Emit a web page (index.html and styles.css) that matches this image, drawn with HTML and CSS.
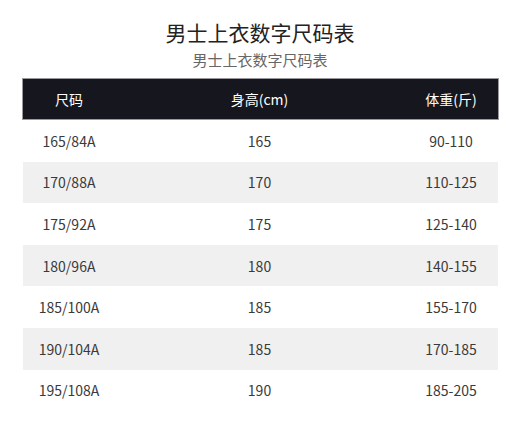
FILE: index.html
```html
<!DOCTYPE html>
<html lang="zh">
<head>
<meta charset="utf-8">
<link rel="stylesheet" href="styles.css">
</head>
<body>
<div class="page">
  <h1 class="title">男士上衣数字尺码表</h1>
  <div class="subtitle">男士上衣数字尺码表</div>
  <div class="table">
    <div class="row head"><span>尺码</span><span>身高(cm)</span><span>体重(斤)</span></div>
    <div class="row"><span>165/84A</span><span>165</span><span>90-110</span></div>
    <div class="row alt"><span>170/88A</span><span>170</span><span>110-125</span></div>
    <div class="row"><span>175/92A</span><span>175</span><span>125-140</span></div>
    <div class="row alt"><span>180/96A</span><span>180</span><span>140-155</span></div>
    <div class="row"><span>185/100A</span><span>185</span><span>155-170</span></div>
    <div class="row alt"><span>190/104A</span><span>185</span><span>170-185</span></div>
    <div class="row"><span>195/108A</span><span>190</span><span>185-205</span></div>
  </div>
</div>
</body>
</html>
```
FILE: styles.css
```css
html, body {
  margin: 0;
  padding: 0;
  background: #ffffff;
}
body {
  font-family: "Noto Sans CJK SC", "Noto Sans", sans-serif;
  color: #3a3a3a;
}
.page {
  width: 520px;
  padding-top: 17px;
}
.title {
  margin: 0;
  font-size: 21px;
  font-weight: 400;
  line-height: 30px;
  text-align: center;
  color: #222222;
}
.subtitle {
  font-size: 15px;
  line-height: 22px;
  text-align: center;
  color: #666666;
  margin-top: 2px;
}
.table {
  margin: 7px 22px 0 23px;
}
.row {
  display: grid;
  grid-template-columns: 92px 1fr 94px;
  height: 41.6px;
  align-items: center;
  font-size: 14px;
}
.row span {
  text-align: center;
}
.row.alt {
  background: #f0f0f0;
}
.row.head {
  background: #16161e;
  color: #ffffff;
  height: 40px;
  border: 1px solid #9a9a9e;
  margin: 0 -1px;
}
```
